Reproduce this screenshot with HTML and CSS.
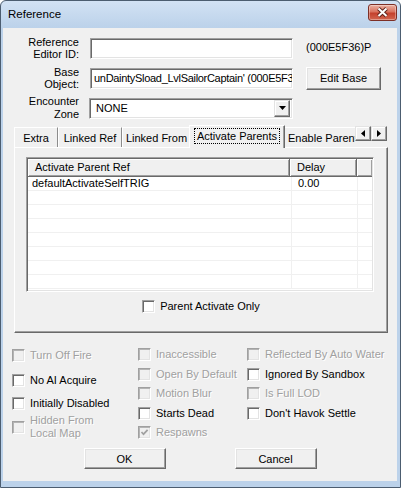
FILE: index.html
```html
<!DOCTYPE html>
<html lang="en">
<head>
      <meta charset="UTF-8">
      <meta name="viewport" content="width=device-width, initial-scale=1.0">
      <title>Reference</title>
      <link rel="stylesheet" href="styles.css">
</head>
<body>
      <div class="window">
            <div class="titlebar">
                  <span class="title">Reference</span>
                  <button class="close-btn" aria-label="Close">
                        <svg width="29" height="17" viewBox="0 0 29 17">
                              <path d="M10.5 4.5 L18.5 12 M18.5 4.5 L10.5 12" stroke="#5a2018" stroke-width="3.8" fill="none"/>
                              <path d="M10.5 4.5 L18.5 12 M18.5 4.5 L10.5 12" stroke="#fff" stroke-width="2" fill="none"/>
                        </svg>
                  </button>
            </div>

            <div class="client">
                  <div class="form">
                        <label class="field-label">Reference<br>Editor ID:</label>
                        <div class="edit"></div>
                        <div class="info">(000E5F36)P</div>

                        <label class="field-label">Base<br>Object:</label>
                        <div class="edit edit-readonly"><span>unDaintySload_LvlSailorCaptain' (000E5F3</span></div>
                        <button class="btn btn-edit-base">Edit Base</button>

                        <label class="field-label field-label-loose">Encounter<br>Zone</label>
                        <div class="combo">
                              <span class="combo-value">NONE</span>
                              <span class="combo-arrow">
                                    <svg width="7" height="4" viewBox="0 0 7 4"><path d="M0 0 H7 L3.5 4 Z" fill="#000"/></svg>
                              </span>
                        </div>
                  </div>

                  <div class="tabstrip">
                        <div class="tabs">
                              <div class="tab tab-extra">Extra</div>
                              <div class="tab tab-linked-ref">Linked Ref</div>
                              <div class="tab tab-linked-from">Linked From</div>
                              <div class="tab tab-activate selected"><span class="focus">Activate Parents</span></div>
                              <div class="tab tab-enable">Enable Parent</div>
                        </div>
                        <div class="scroll-btn">
                              <svg width="4" height="7" viewBox="0 0 4 7"><path d="M4 0 V7 L0 3.5 Z" fill="#000"/></svg>
                        </div>
                        <div class="scroll-btn">
                              <svg width="4" height="7" viewBox="0 0 4 7"><path d="M0 0 V7 L4 3.5 Z" fill="#000"/></svg>
                        </div>
                  </div>

                  <div class="panel">
                        <div class="listview">
                              <div class="lv-header">
                                    <div class="lv-col">Activate Parent Ref</div>
                                    <div class="lv-col">Delay</div>
                                    <div class="lv-col"></div>
                              </div>
                              <div class="lv-row"><span>defaultActivateSelfTRIG</span><span>0.00</span><span></span></div>
                              <div class="lv-row"><span></span><span></span><span></span></div>
                              <div class="lv-row"><span></span><span></span><span></span></div>
                              <div class="lv-row"><span></span><span></span><span></span></div>
                              <div class="lv-row"><span></span><span></span><span></span></div>
                              <div class="lv-row"><span></span><span></span><span></span></div>
                              <div class="lv-row"><span></span><span></span><span></span></div>
                              <div class="lv-row"><span></span><span></span><span></span></div>
                        </div>
                        <div class="panel-check">
                              <label class="check"><span class="box"></span><span>Parent Activate Only</span></label>
                        </div>
                  </div>

                  <div class="flags">
                        <div class="flag-col flag-col-first">
                              <label class="check disabled"><span class="box"></span><span>Turn Off Fire</span></label>
                              <label class="check"><span class="box"></span><span>No AI Acquire</span></label>
                              <label class="check"><span class="box"></span><span>Initially Disabled</span></label>
                              <label class="check disabled"><span class="box"></span><span>Hidden From<br>Local Map</span></label>
                        </div>
                        <div class="flag-col">
                              <label class="check disabled"><span class="box"></span><span>Inaccessible</span></label>
                              <label class="check disabled"><span class="box"></span><span>Open By Default</span></label>
                              <label class="check disabled"><span class="box"></span><span>Motion Blur</span></label>
                              <label class="check"><span class="box"></span><span>Starts Dead</span></label>
                              <label class="check disabled">
                                    <span class="box">
                                          <svg width="9" height="9" viewBox="0 0 9 9"><path d="M1.5 4 L3.5 6.2 L7.6 1.8" stroke="#a0a0a0" stroke-width="1.7" fill="none"/></svg>
                                    </span>
                                    <span>Respawns</span>
                              </label>
                        </div>
                        <div class="flag-col">
                              <label class="check disabled"><span class="box"></span><span>Reflected By Auto Water</span></label>
                              <label class="check"><span class="box"></span><span>Ignored By Sandbox</span></label>
                              <label class="check disabled"><span class="box"></span><span>Is Full LOD</span></label>
                              <label class="check"><span class="box"></span><span>Don't Havok Settle</span></label>
                        </div>
                  </div>

                  <div class="dlg-buttons">
                        <button class="btn btn-dlg">OK</button>
                        <button class="btn btn-dlg">Cancel</button>
                  </div>
            </div>
      </div>
</body>
</html>
```

FILE: styles.css
```css
:root {
	--face: #f0f0f0;
	--light: #e3e3e3;
	--shadow: #a0a0a0;
	--dark: #696969;
	--frame: #bcd2ea;
	--disabled: #a0a0a0;
}
html {
	box-sizing: border-box;
}
*, *:before, *:after {
	box-sizing: inherit;
}
body {
	margin: 0;
	font: 11px "Liberation Sans", Arial, sans-serif;
	color: #000;
	background: #fff;
}
button {
	font: inherit;
	color: inherit;
	margin: 0;
	padding: 0;
}

/* window frame */
.window {
	width: 401px;
	height: 488px;
	display: flex;
	flex-direction: column;
	padding: 0 3px 6px 2px;
	border: 1px solid #4c5d70;
	border-radius: 6px 6px 0 0;
	background: linear-gradient(#d2e2f4, var(--frame) 26px, var(--frame));
}
.titlebar {
	height: 27px;
	flex: none;
	display: flex;
	justify-content: space-between;
	align-items: flex-start;
}
.title {
	padding-left: 5px;
	line-height: 27px;
	font-size: 11.5px;
	color: #000;
}
.close-btn {
	width: 29px;
	height: 17px;
	margin-top: 3px;
	border: 1px solid #7d2f26;
	border-radius: 3px;
	background: linear-gradient(#eab0a2, #d9735f 45%, #c4412d 55%, #d2664f);
	box-shadow: inset 0 0 0 1px rgba(255, 255, 255, .35);
	display: flex;
	align-items: center;
	justify-content: center;
}
.close-btn svg {
	display: block;
	margin: -1px;
}

.client {
	flex: 1;
	background: var(--face);
	display: flex;
	flex-direction: column;
}

/* top form */
.form {
	display: grid;
	grid-template-columns: 87px 216px 75px;
	grid-auto-rows: 30px;
	align-items: center;
	padding-top: 5px;
}
.field-label {
	text-align: right;
	padding-right: 11px;
	line-height: 12px;
}
.field-label-loose {
	line-height: 13px;
}
.edit, .combo {
	height: 21px;
	border: 1px solid;
	border-color: var(--shadow) #fff #fff var(--shadow);
	box-shadow: inset 1px 1px var(--dark), inset -1px -1px var(--light);
	background: #fff;
	display: flex;
	align-items: center;
	overflow: hidden;
	white-space: nowrap;
}
.edit {
	width: 203px;
	padding: 0 3px;
}
.edit-readonly span {
	letter-spacing: -0.3px;
}
.info {
	padding-bottom: 2px;
}
.btn {
	background: var(--face);
	border: 1px solid;
	border-color: #fff var(--dark) var(--dark) #fff;
	box-shadow: inset -1px -1px var(--shadow), inset 1px 1px var(--light);
}
.btn-edit-base {
	width: 75px;
	height: 23px;
}
.combo {
	width: 204px;
	margin-left: -1px;
	justify-content: space-between;
	padding: 2px 2px 2px 6px;
}
.combo-arrow {
	width: 16px;
	height: 17px;
	background: var(--face);
	border: 1px solid;
	border-color: var(--light) var(--dark) var(--dark) var(--light);
	box-shadow: inset -1px -1px var(--shadow), inset 1px 1px #fff;
	display: flex;
	align-items: center;
	justify-content: center;
}
.combo-arrow svg, .scroll-btn svg {
	display: block;
}

/* tabs */
.tabstrip {
	display: flex;
	align-items: flex-start;
	height: 23px;
	width: 373px;
	margin: 2px 0 0 11px;
	position: relative;
	z-index: 1;
}
.tabs {
	flex: 1;
	height: 23px;
	display: flex;
	align-items: flex-start;
	overflow: hidden;
}
.tab {
	flex: none;
	height: 20px;
	margin-top: 2px;
	border-top: 1px solid #fff;
	border-left: 1px solid #fff;
	border-right: 1px solid #8c8c8c;
	display: flex;
	align-items: center;
	justify-content: center;
	white-space: nowrap;
	padding-top: 1px;
}
.tab-extra {
	width: 44px;
}
.tab-linked-ref {
	width: 64px;
}
.tab-linked-from {
	width: 69px;
}
.tab-activate {
	width: 92px;
}
.tab-enable {
	width: 100px;
	justify-content: flex-start;
	padding-left: 4px;
}
.tab.selected {
	width: 96px;
	height: 23px;
	margin: 0 -2px;
	padding-top: 0;
	padding-bottom: 2px;
	background: var(--face);
	border-right-color: var(--dark);
	box-shadow: inset -1px 0 var(--shadow);
	position: relative;
	z-index: 2;
}
.focus {
	outline: 1px dotted #000;
	padding: 1px 2px;
	line-height: 12px;
}
.scroll-btn {
	width: 16px;
	height: 15px;
	margin-top: 1px;
	background: var(--face);
	border: 1px solid;
	border-color: var(--light) var(--dark) var(--dark) var(--light);
	box-shadow: inset -1px -1px var(--shadow), inset 1px 1px #fff;
	display: flex;
	align-items: center;
	justify-content: center;
}

/* tab panel */
.panel {
	width: 374px;
	height: 186px;
	margin: -1px 0 0 11px;
	border: 1px solid;
	border-color: #fff var(--dark) var(--dark) #fff;
	box-shadow: inset -1px -1px var(--shadow);
	padding: 9px 0 0 11px;
}
.listview {
	width: 348px;
	height: 135px;
	border: 1px solid;
	border-color: var(--shadow) #fff #fff var(--shadow);
	box-shadow: inset 1px 1px var(--dark), inset -1px -1px var(--light);
	background: #fff;
	padding: 1px;
	overflow: hidden;
}
.lv-header {
	display: grid;
	grid-template-columns: 262px 67px 1fr;
	height: 18px;
}
.lv-col {
	background: var(--face);
	border-right: 1px solid var(--dark);
	border-bottom: 1px solid var(--dark);
	box-shadow: inset 1px 1px #fff, inset -1px -1px var(--shadow);
	padding-left: 7px;
	line-height: 17px;
}
.lv-col:last-child {
	border-right: 0;
}
.lv-row {
	display: grid;
	grid-template-columns: 264px 66px 1fr;
	height: 14px;
	border-bottom: 1px solid #f0f0f0;
	line-height: 13px;
}
.lv-row span {
	border-right: 1px solid #f0f0f0;
	padding-left: 4px;
}
.lv-row span:nth-child(2) {
	padding-left: 6px;
}
.lv-row span:last-child {
	border-right: 0;
}
.panel-check {
	display: flex;
	justify-content: center;
	margin: 8px 11px 0 0;
}

/* check boxes */
.check {
	display: flex;
	align-items: center;
	gap: 5px;
	line-height: 13px;
	white-space: nowrap;
}
.box {
	flex: none;
	width: 13px;
	height: 13px;
	border: 1px solid;
	border-color: var(--shadow) #fff #fff var(--shadow);
	box-shadow: inset 1px 1px var(--dark), inset -1px -1px var(--light);
	background: #fff;
	display: flex;
	align-items: center;
	justify-content: center;
}
.box svg {
	display: block;
}
.check.disabled {
	color: var(--disabled);
	text-shadow: 1px 1px 0 #fff;
}
.check.disabled .box {
	background: var(--face);
	box-shadow: inset 1px 1px #b4b4b4, inset -1px -1px var(--light);
}

.flags {
	display: grid;
	grid-template-columns: 126px 109px 1fr;
	padding: 15px 0 0 9px;
}
.flag-col {
	display: flex;
	flex-direction: column;
}
.flag-col .check + .check {
	margin-top: 6.5px;
}
.flag-col-first .check:nth-child(1) {
	margin-top: 1px;
}
.flag-col-first .check:nth-child(2) {
	margin-top: 12px;
}
.flag-col-first .check:nth-child(3) {
	margin-top: 9.5px;
}
.flag-col-first .check:nth-child(4) {
	margin-top: 4.5px;
}

/* dialog buttons */
.dlg-buttons {
	display: flex;
	justify-content: center;
	gap: 69px;
	margin: auto 0 12px;
}
.btn-dlg {
	width: 82px;
	height: 21px;
}
```
